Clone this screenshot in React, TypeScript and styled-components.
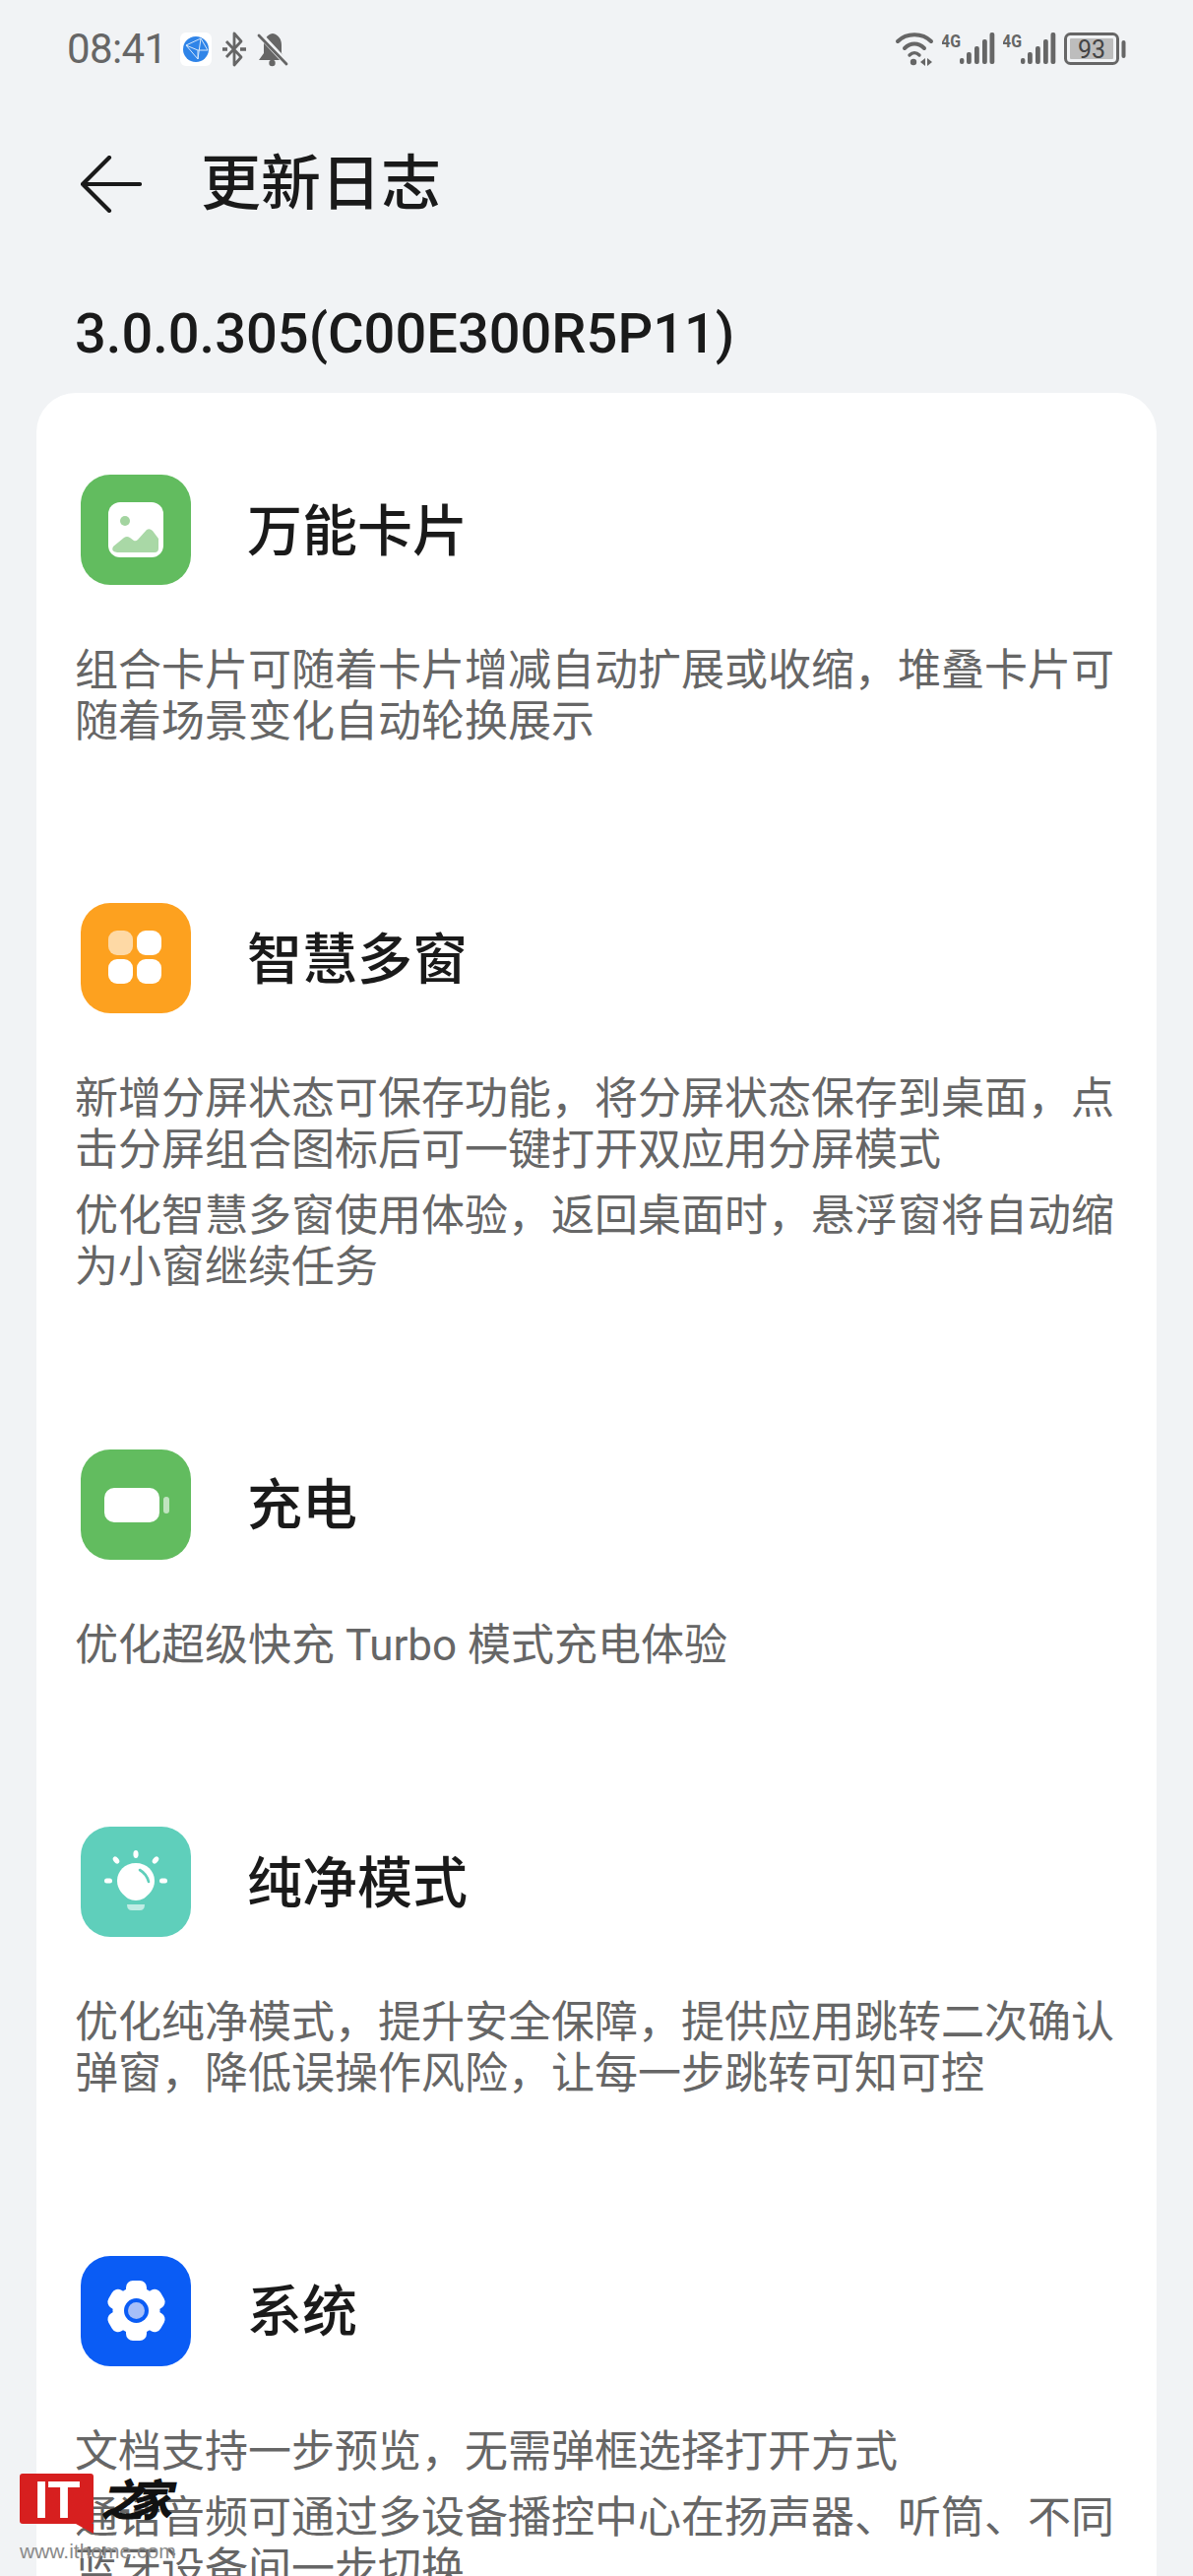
import styled, { createGlobalStyle } from "styled-components";
import { ReactNode } from "react";

const GlobalStyle = createGlobalStyle`
    html, body {
        margin: 0;
        padding: 0;
        background: #f1f3f5;
    }
    * {
        box-sizing: border-box;
    }
`

const Page = styled.div`
    position: relative;
    width: 1212px;
    height: 2616px;
    overflow: hidden;
    background: #f1f3f5;
    font-family: Roboto, "Noto Sans CJK SC", sans-serif;
`

const StatusBar = styled.div`
    display: flex;
    align-items: center;
    justify-content: space-between;
    height: 100px;
    padding: 0 68px 0 68px;
    color: #666;
`

const StatusGroup = styled.div<{ $gap: number }>`
    display: flex;
    align-items: center;
    gap: ${p => p.$gap}px;
`

const Clock = styled.span`
    font-size: 42px;
    width: 100px;
    letter-spacing: -0.6px;
    line-height: 40px;
    color: #666;
    margin-right: 5px;
    white-space: nowrap;
`

const AppBar = styled.header`
    display: flex;
    align-items: center;
    height: 64px;
    margin-top: 55px;
    padding-left: 82px;
    gap: 60px;
`

const PageTitle = styled.h1`
    margin: 0;
    font-size: 61px;
    font-weight: 500;
    line-height: 64px;
    color: #1a1a1a;
`

const Version = styled.h2`
    margin: 86px 0 0;
    padding-left: 76px;
    font-size: 56px;
    font-weight: 500;
    line-height: 68px;
    color: #1a1a1a;
`

const Card = styled.main`
    margin: 26px 37px 0;
    padding: 83px 39px 120px;
    background: #fff;
    border-radius: 40px 40px 0 0;
`

const Section = styled.section`
    margin-bottom: 158.4px;
`

const SectionHead = styled.div`
    display: flex;
    align-items: center;
    gap: 57px;
    padding-left: 6px;
    margin-bottom: 61px;
`

const Tile = styled.div<{ $bg: string }>`
    width: 112px;
    height: 112px;
    flex: none;
    border-radius: 30px;
    background: ${p => p.$bg};
    svg {
        display: block;
    }
`

const SectionTitle = styled.h3`
    margin: 0;
    padding-bottom: 8px;
    font-size: 56px;
    font-weight: 500;
    color: #1a1a1a;
`

const Paragraph = styled.p`
    margin: 0 0 15px;
    font-size: 44px;
    line-height: 52px;
    color: #666;
`

const Watermark = styled.div`
    position: absolute;
    left: 20px;
    top: 2512px;
    width: 160px;
`

const LogoBadge = styled.div`
    position: relative;
    width: 75px;
    height: 51px;
    border-radius: 3px;
    background: #d71f1f;
    color: #fff;
    font: 700 54px/52px "Liberation Sans", sans-serif;
    text-align: center;
    letter-spacing: -1px;
    &::after {
        content: "";
        position: absolute;
        right: 0;
        bottom: -10px;
        border-left: 18px solid transparent;
        border-top: 10px solid #d71f1f;
    }
`

const LogoBrush = styled.span`
    position: absolute;
    left: 86px;
    top: -1px;
    font: 900 44px/50px "Noto Sans CJK SC", sans-serif;
    color: #111;
    letter-spacing: -15px;
    white-space: nowrap;
    transform: skewX(-12deg);
`

const LogoUrl = styled.div`
    margin-top: 21px;
    font: 400 21px/14px "Liberation Sans", sans-serif;
    color: #8a8a8a;
    white-space: nowrap;
`

const ICON = "#666";

function GlobeIcon() {
    return (
        <svg width="32" height="34" viewBox="0 0 32 34">
            <rect width="32" height="34" rx="6" fill="#fff" />
            <circle cx="16" cy="17" r="13" fill="#2f84e8" />
            <path d="M6 13 L21 6 L18 27 Z M21 6 L28 18 M6 13 L18 18 L28 18 M18 18 L18 27" stroke="#d7e8fb" strokeWidth="1" fill="none" />
        </svg>
    )
}

function BluetoothIcon() {
    return (
        <svg width="26" height="36" viewBox="0 0 26 36" fill="none" stroke={ICON} strokeWidth="2.8">
            <path d="M5 10 L20 26 L13 34 V2 L20 10 L5 26" strokeLinejoin="round" />
            <path d="M1 18 H6 M19 18 H25" strokeWidth="3.4" />
        </svg>
    )
}

function BellOffIcon() {
    return (
        <svg width="32" height="35" viewBox="0 0 32 35">
            <path d="M16 1 C10 2 7 7 7 13 V21 L2 28 H29 L25 21 V13 C25 7 22 2 16 1 Z" fill={ICON} />
            <circle cx="15.5" cy="31" r="3.2" fill={ICON} />
            <path d="M2 1 L30 31" stroke="#f1f3f5" strokeWidth="6" />
            <path d="M2 3 L30 32" stroke={ICON} strokeWidth="2.8" strokeLinecap="round" />
        </svg>
    )
}

function WifiIcon() {
    return (
        <svg width="40" height="34" viewBox="0 0 40 34" fill="none" stroke={ICON} strokeLinecap="round" strokeWidth="4">
            <path d="M3 9 C12 0 28 0 37 9" />
            <path d="M10 16 C16 10 24 10 30 16" />
            <path d="M15 23 C18 20 22 20 25 23" strokeWidth="3.4" />
            <circle cx="19" cy="30" r="3.2" fill={ICON} stroke="none" />
            <path d="M31 26 L26 30 L31 34 Z M33 26 L38 30 L33 34 Z" fill={ICON} stroke="none" />
        </svg>
    )
}

function SignalIcon() {
    return (
        <svg width="54" height="34" viewBox="0 0 54 34">
            <text x="-1" y="15" fontFamily="Roboto, sans-serif" fontWeight="700" fontSize="19" fill={ICON} textLength="20" lengthAdjust="spacingAndGlyphs">4G</text>
            <rect x="18" y="26" width="4.4" height="6" rx="2" fill={ICON} />
            <rect x="25" y="20" width="4.8" height="12" rx="2" fill={ICON} />
            <rect x="33" y="14" width="4.8" height="18" rx="2" fill={ICON} />
            <rect x="41" y="7" width="4.8" height="25" rx="2" fill={ICON} />
            <rect x="48.5" y="0" width="4.8" height="32" rx="2" fill={ICON} />
        </svg>
    )
}

function BatteryIcon() {
    return (
        <svg width="63" height="34" viewBox="0 0 63 34">
            <rect x="1.5" y="1.5" width="53" height="30" rx="5" fill="none" stroke={ICON} strokeWidth="3" />
            <rect x="6" y="6" width="44" height="21" rx="1" fill="#bdbdbd" />
            <rect x="58.5" y="8" width="4" height="18" rx="2" fill={ICON} />
            <text x="28" y="26" textAnchor="middle" fontFamily="Roboto, sans-serif" fontSize="25" fill="#444">93</text>
        </svg>
    )
}

function BackIcon() {
    return (
        <svg width="62" height="58" viewBox="0 0 62 58" fill="none" stroke="#1a1a1a" strokeWidth="4.2" strokeLinecap="round" strokeLinejoin="round">
            <path d="M29 2 L2 29 L29 56 M2 29 H60" />
        </svg>
    )
}

function PictureGlyph() {
    return (
        <svg width="112" height="112" viewBox="0 0 112 112">
            <rect x="28" y="28" width="56" height="56" rx="12" fill="#fff" />
            <circle cx="45" cy="47" r="5" fill="#a3d4a0" />
            <path d="M33 73 L44 64 Q47 62 50 64 L54 67 Q56 68 58 66 L67 56 Q70 54 73 57 L79 65 V75 Q79 79 75 79 H37 Q30 78 33 73 Z" fill="#a9d8a6" />
        </svg>
    )
}

function GridGlyph() {
    return (
        <svg width="112" height="112" viewBox="0 0 112 112" fill="#fff">
            <rect x="28" y="28" width="25" height="25" rx="9" opacity="0.6" />
            <rect x="57" y="28" width="25" height="25" rx="9" />
            <rect x="28" y="57" width="25" height="25" rx="9" />
            <rect x="57" y="57" width="25" height="25" rx="9" />
        </svg>
    )
}

function BatteryGlyph() {
    return (
        <svg width="112" height="112" viewBox="0 0 112 112" fill="#fff">
            <rect x="24" y="39" width="56" height="35" rx="10" />
            <rect x="84" y="48" width="6" height="17" rx="3" opacity="0.6" />
        </svg>
    )
}

function BulbGlyph() {
    return (
        <svg width="112" height="112" viewBox="0 0 112 112" fill="#fff">
            <ellipse cx="56" cy="28" rx="2.6" ry="4" />
            <ellipse cx="36" cy="34" rx="2.6" ry="4" transform="rotate(-40 36 34)" />
            <ellipse cx="76" cy="34" rx="2.6" ry="4" transform="rotate(40 76 34)" />
            <rect x="24" y="52.5" width="8" height="5" rx="2.5" />
            <rect x="80" y="52.5" width="8" height="5" rx="2.5" />
            <path d="M56 37 C67 37 75 45 75 55 C75 64 69 69 64 73 Q60 75 56 75 Q52 75 48 73 C43 69 37 64 37 55 C37 45 45 37 56 37 Z" />
            <path d="M60 44 Q67 48 69 56" stroke="#5fcfbb" strokeWidth="2.6" strokeLinecap="round" fill="none" />
            <path d="M47 79 H65 Q65 85 60 85 H52 Q47 85 47 79 Z" opacity="0.6" />
        </svg>
    )
}

function GearGlyph() {
    return (
        <svg width="112" height="112" viewBox="0 0 112 112">
            <g fill="#fff">
                <circle cx="56.5" cy="55.5" r="24" />
                {[0, 60, 120, 180, 240, 300].map(angle => (
                    <rect key={angle} x="46" y="25" width="21" height="24" rx="7" transform={`rotate(${angle} 56.5 55.5)`} />
                ))}
            </g>
            <circle cx="56.5" cy="55.5" r="12.5" fill="#0a5cf5" />
            <circle cx="56.5" cy="55.5" r="8.5" fill="#a6bff8" />
        </svg>
    )
}

type Entry = {
    title: string;
    color: string;
    glyph: ReactNode;
    lines: string[];
}

const entries: Entry[] = [
    {
        title: "万能卡片",
        color: "#62bc5f",
        glyph: <PictureGlyph />,
        lines: ["组合卡片可随着卡片增减自动扩展或收缩，堆叠卡片可随着场景变化自动轮换展示"],
    },
    {
        title: "智慧多窗",
        color: "#fda11f",
        glyph: <GridGlyph />,
        lines: [
            "新增分屏状态可保存功能，将分屏状态保存到桌面，点击分屏组合图标后可一键打开双应用分屏模式",
            "优化智慧多窗使用体验，返回桌面时，悬浮窗将自动缩为小窗继续任务",
        ],
    },
    {
        title: "充电",
        color: "#62bc5f",
        glyph: <BatteryGlyph />,
        lines: ["优化超级快充 Turbo 模式充电体验"],
    },
    {
        title: "纯净模式",
        color: "#5fcfbb",
        glyph: <BulbGlyph />,
        lines: ["优化纯净模式，提升安全保障，提供应用跳转二次确认弹窗，降低误操作风险，让每一步跳转可知可控"],
    },
    {
        title: "系统",
        color: "#0a5cf5",
        glyph: <GearGlyph />,
        lines: [
            "文档支持一步预览，无需弹框选择打开方式",
            "通话音频可通过多设备播控中心在扬声器、听筒、不同蓝牙设备间一步切换",
        ],
    },
]

export default function App() {
    return (
        <Page>
            <GlobalStyle />
            <StatusBar>
                <StatusGroup $gap={10}>
                    <Clock>08:41</Clock>
                    <GlobeIcon />
                    <BluetoothIcon />
                    <BellOffIcon />
                </StatusGroup>
                <StatusGroup $gap={8}>
                    <WifiIcon />
                    <SignalIcon />
                    <SignalIcon />
                    <BatteryIcon />
                </StatusGroup>
            </StatusBar>
            <AppBar>
                <BackIcon />
                <PageTitle>更新日志</PageTitle>
            </AppBar>
            <Version>3.0.0.305(C00E300R5P11)</Version>
            <Card>
                {entries.map(entry => (
                    <Section key={entry.title}>
                        <SectionHead>
                            <Tile $bg={entry.color}>{entry.glyph}</Tile>
                            <SectionTitle>{entry.title}</SectionTitle>
                        </SectionHead>
                        {entry.lines.map(line => (
                            <Paragraph key={line}>{line}</Paragraph>
                        ))}
                    </Section>
                ))}
            </Card>
            <Watermark>
                <LogoBadge>
                    IT
                    <LogoBrush>之家</LogoBrush>
                </LogoBadge>
                <LogoUrl>www.ithome.com</LogoUrl>
            </Watermark>
        </Page>
    )
}
